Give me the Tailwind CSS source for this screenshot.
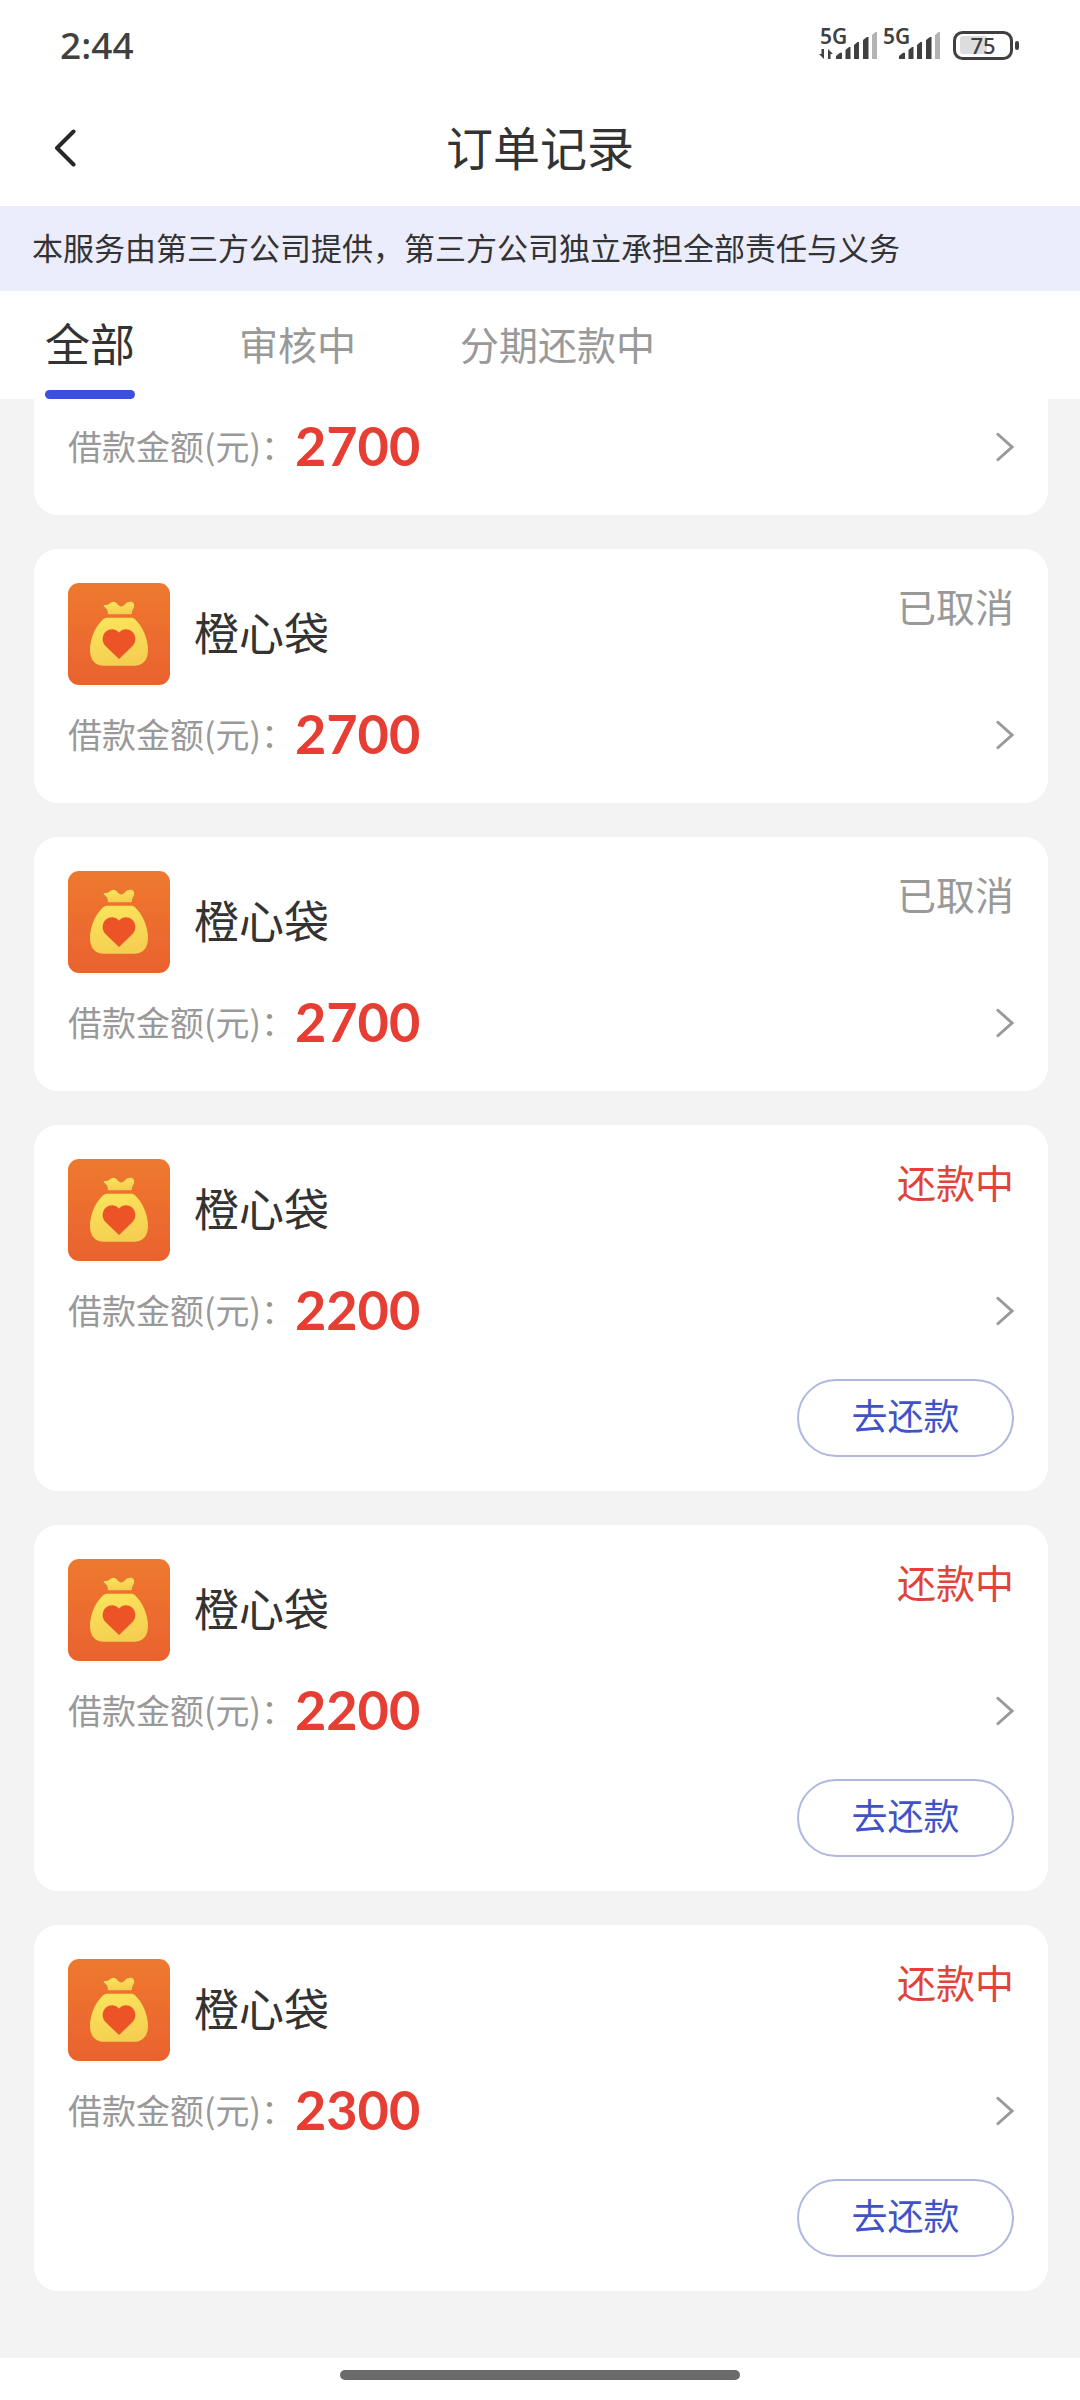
<!DOCTYPE html>
<html lang="zh-CN">
<head>
<meta charset="utf-8">
<meta name="viewport" content="width=device-width, initial-scale=1">
<title>订单记录</title>
<script src="https://cdn.jsdelivr.net/npm/@tailwindcss/browser@4"></script>
</head>
<body class="min-h-screen flex flex-col bg-white text-[#333] font-['Noto_Sans_CJK_SC',sans-serif]">

<svg class="absolute size-0" aria-hidden="true">
  <defs>
    <linearGradient id="orange" x1="0" y1="0" x2="0" y2="1"><stop offset="0" stop-color="#ee792e"/><stop offset="1" stop-color="#ea622f"/></linearGradient>
    <linearGradient id="gold" x1="0" y1="0" x2="0.3" y2="1"><stop offset="0" stop-color="#fbe65c"/><stop offset="1" stop-color="#f6cf52"/></linearGradient>
  </defs>
  <symbol id="bag" viewBox="0 0 102 102">
    <rect width="102" height="102" rx="11" fill="url(#orange)"/>
    <path d="M40 31.3L39.6 28C39 26 37.5 25 36 23.6C35 22.6 36 21.8 37.5 22C41 22.6 42 18.8 45.5 18.8C49 18.8 50 23.6 53.3 23.6C56.5 23.6 57.5 18.8 62 18.8C65.5 18.8 67 21.5 65.8 24.5C65 26.5 64 27.5 63.6 31.3Z" fill="url(#gold)"/>
    <path d="M40 34.7H62.5C64.5 34.7 66 35.3 67.3 36.6C74 43 80 55 80 67C80 77 74.500 82.800 66 82.800H36C27.500 82.800 22 77 22 67C22 55 28 43 34.800 36.600C36.300 35.300 38 34.700 40 34.700Z" fill="url(#gold)"/>
    <path d="M51 76L37.500 63C34 59.500 33.700 53.500 37 49.500C41 45 47.500 45.300 51 49.600C54.500 45.300 61 45 65 49.500C68.300 53.500 68 59.500 64.500 63Z" fill="#ec5427"/>
  </symbol>
  <symbol id="next" viewBox="0 0 18 30"><path d="M1 1.500L16 15L1 28.500" fill="none" stroke="#999" stroke-width="3"/></symbol>
</svg>

<div class="h-[90px] px-[60px] flex items-center justify-between text-[#404040]">
  <time class="text-[37px] leading-[90px] font-medium font-['Noto_Sans',sans-serif]">2:44</time>
  <svg class="w-[202px] h-[58px]" viewBox="818 16 202 58" role="img" aria-label="5G 5G 75">
    <g fill="#404040" class="font-['Noto_Sans',sans-serif] font-semibold">
      <text x="820" y="44" font-size="21">5G</text>
      <text x="883" y="44" font-size="21">5G</text>
      <path d="M821.500 49H824V59L819 54H821.500ZM828 59V49L833 54H830.500V59Z"/>
      <path d="M836 59V56L840 52.700H842V59ZM845.500 59V50L849 47H850.500V59ZM854 59V45L857.500 42H859V59ZM863 59V40L867 37H868.500V59Z"/>
      <path d="M899 59V56L903 52.700H905V59ZM908.500 59V50L912 47H913.500V59ZM917 59V45L920.500 42H922V59ZM926 59V40L930 37H931.500V59Z"/>
    </g>
    <path d="M872 59V35L875.500 32H877V59ZM935 59V35L938.500 32H940V59Z" fill="#b3b3b3"/>
    <rect x="960" y="36" width="27" height="18" rx="3" fill="#ddd"/>
    <rect x="954.500" y="32.500" width="57" height="26" rx="8" fill="none" stroke="#404040" stroke-width="3"/>
    <rect x="1015" y="41" width="4" height="9" rx="2" fill="#404040"/>
    <text x="983" y="54" text-anchor="middle" font-size="22" fill="#404040" class="font-['Noto_Sans',sans-serif] font-medium">75</text>
  </svg>
</div>

<header class="h-[116px] grid grid-cols-[1fr_auto_1fr] items-center px-[54px]">
  <button type="button" aria-label="返回" class="justify-self-start">
    <svg class="w-[22px] h-[38px]" viewBox="0 0 22 38"><path d="M19.500 2.500L3 19L19.500 35.500" fill="none" stroke="#282828" stroke-width="4" stroke-linecap="round" stroke-linejoin="round"/></svg>
  </button>
  <h1 class="pb-1 text-[47px] leading-[68px]">订单记录</h1>
</header>

<p class="px-8 h-[85px] bg-[#ebedfc] text-[31px] leading-[82px]">本服务由第三方公司提供，第三方公司独立承担全部责任与义务</p>

<nav class="h-[108px] px-[45px] flex gap-[104px] text-[39px] text-[#999]">
  <button type="button" class="flex flex-col text-[45px] text-[#333]">
    <span class="flex-1 flex items-center pt-1">全部</span>
    <span class="w-full h-[9px] rounded-full bg-[#3b50e0]"></span>
  </button>
  <button type="button" class="pb-1">审核中</button>
  <button type="button" class="pb-1">分期还款中</button>
</nav>

<main class="flex-1 bg-[#f3f3f3] pl-[34px] pr-8 pb-[67px] flex flex-col gap-[34px]">
  <article class="bg-white rounded-b-3xl px-[34px] pt-[14px] pb-[34px]">
    <a href="#" class="h-[68px] flex items-center">
      <span class="pb-1 text-[34px] text-[#999]">借款金额(元)：</span>
      <strong class="pb-1 text-[54px] text-[#e63e34] font-['Lato',sans-serif]">2700</strong>
      <svg class="w-[18px] h-[30px] ml-auto"><use href="#next"/></svg>
    </a>
  </article>

  <article class="bg-white rounded-3xl p-[34px]">
    <div class="flex items-start">
      <svg class="size-[102px]"><use href="#bag"/></svg>
      <h2 class="ml-6 text-[45px] leading-[98px]">橙心袋</h2>
      <span class="ml-auto text-[39px] leading-[44px] text-[#999]">已取消</span>
    </div>
    <a href="#" class="mt-4 h-[68px] flex items-center">
      <span class="pb-1 text-[34px] text-[#999]">借款金额(元)：</span>
      <strong class="pb-1 text-[54px] text-[#e63e34] font-['Lato',sans-serif]">2700</strong>
      <svg class="w-[18px] h-[30px] ml-auto"><use href="#next"/></svg>
    </a>
  </article>

  <article class="bg-white rounded-3xl p-[34px]">
    <div class="flex items-start">
      <svg class="size-[102px]"><use href="#bag"/></svg>
      <h2 class="ml-6 text-[45px] leading-[98px]">橙心袋</h2>
      <span class="ml-auto text-[39px] leading-[44px] text-[#999]">已取消</span>
    </div>
    <a href="#" class="mt-4 h-[68px] flex items-center">
      <span class="pb-1 text-[34px] text-[#999]">借款金额(元)：</span>
      <strong class="pb-1 text-[54px] text-[#e63e34] font-['Lato',sans-serif]">2700</strong>
      <svg class="w-[18px] h-[30px] ml-auto"><use href="#next"/></svg>
    </a>
  </article>

  <article class="bg-white rounded-3xl p-[34px]">
    <div class="flex items-start">
      <svg class="size-[102px]"><use href="#bag"/></svg>
      <h2 class="ml-6 text-[45px] leading-[98px]">橙心袋</h2>
      <span class="ml-auto text-[39px] leading-[44px] text-[#e0433a]">还款中</span>
    </div>
    <a href="#" class="mt-4 h-[68px] flex items-center">
      <span class="pb-1 text-[34px] text-[#999]">借款金额(元)：</span>
      <strong class="pb-1 text-[54px] text-[#e63e34] font-['Lato',sans-serif]">2200</strong>
      <svg class="w-[18px] h-[30px] ml-auto"><use href="#next"/></svg>
    </a>
    <button type="button" class="mt-[34px] ml-auto block w-[217px] h-[78px] rounded-full border-2 border-[#aeb8e0] text-[36px] leading-[66px] pb-2 text-[#3f52cc]">去还款</button>
  </article>

  <article class="bg-white rounded-3xl p-[34px]">
    <div class="flex items-start">
      <svg class="size-[102px]"><use href="#bag"/></svg>
      <h2 class="ml-6 text-[45px] leading-[98px]">橙心袋</h2>
      <span class="ml-auto text-[39px] leading-[44px] text-[#e0433a]">还款中</span>
    </div>
    <a href="#" class="mt-4 h-[68px] flex items-center">
      <span class="pb-1 text-[34px] text-[#999]">借款金额(元)：</span>
      <strong class="pb-1 text-[54px] text-[#e63e34] font-['Lato',sans-serif]">2200</strong>
      <svg class="w-[18px] h-[30px] ml-auto"><use href="#next"/></svg>
    </a>
    <button type="button" class="mt-[34px] ml-auto block w-[217px] h-[78px] rounded-full border-2 border-[#aeb8e0] text-[36px] leading-[66px] pb-2 text-[#3f52cc]">去还款</button>
  </article>

  <article class="bg-white rounded-3xl p-[34px]">
    <div class="flex items-start">
      <svg class="size-[102px]"><use href="#bag"/></svg>
      <h2 class="ml-6 text-[45px] leading-[98px]">橙心袋</h2>
      <span class="ml-auto text-[39px] leading-[44px] text-[#e0433a]">还款中</span>
    </div>
    <a href="#" class="mt-4 h-[68px] flex items-center">
      <span class="pb-1 text-[34px] text-[#999]">借款金额(元)：</span>
      <strong class="pb-1 text-[54px] text-[#e63e34] font-['Lato',sans-serif]">2300</strong>
      <svg class="w-[18px] h-[30px] ml-auto"><use href="#next"/></svg>
    </a>
    <button type="button" class="mt-[34px] ml-auto block w-[217px] h-[78px] rounded-full border-2 border-[#aeb8e0] text-[36px] leading-[66px] pb-2 text-[#3f52cc]">去还款</button>
  </article>
</main>

<footer class="h-[42px] pt-3 flex justify-center">
  <div class="w-[37%] h-[10px] rounded-full bg-[#6a6a6a]"></div>
</footer>
</body>
</html>
